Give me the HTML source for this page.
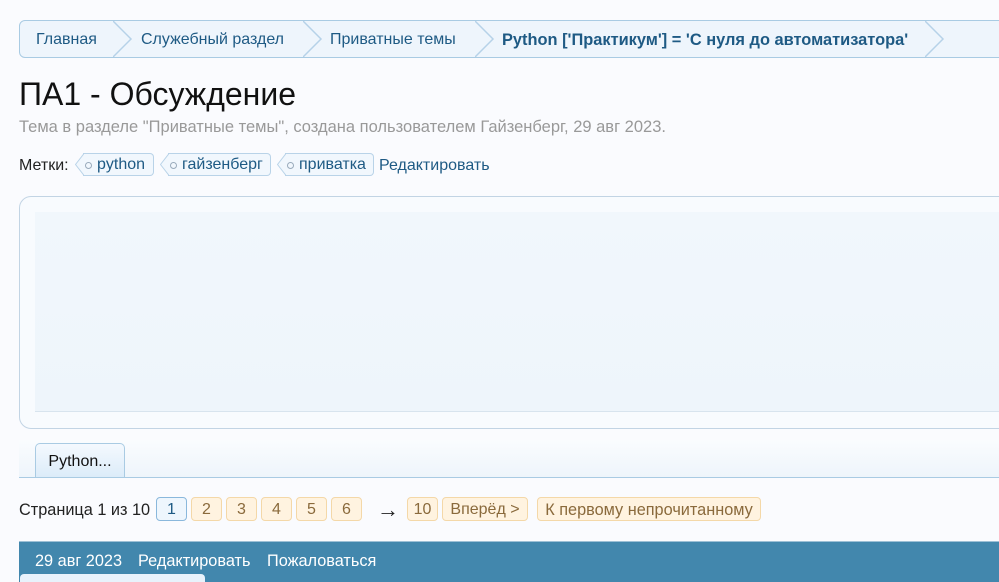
<!DOCTYPE html>
<html><head><meta charset="utf-8"><style>
body{margin:0;width:999px;height:580px;overflow:hidden;background:#fafbfe;font-family:"Liberation Sans",sans-serif;position:relative}
.a{position:absolute}
.bc{left:19px;top:20px;width:1000px;height:36px;border:1px solid #a9cbe3;border-radius:6px;background:#eef5fc;}
.bc span{position:absolute;top:10px;font-size:16px;color:#1e5a84;white-space:nowrap}
.chev{position:absolute;top:0}
h1{position:absolute;left:19px;top:76px;margin:0;font-weight:normal;font-size:32px;color:#111}
.sub{left:19px;top:118px;font-size:16.5px;color:#999;white-space:nowrap}
.tags{left:19px;top:157px;font-size:16px;color:#222}
.tag{display:inline-block;position:absolute;top:-4px;height:23px;border:1px solid #b9d3e8;border-left:none;border-radius:0 4px 4px 0;background:#f1f7fd;color:#1e5a84;line-height:22px;font-size:16px;padding-left:14px;padding-right:0;box-sizing:border-box;white-space:nowrap}
.tag svg{position:absolute;left:-8px;top:-1px}
.tag i{position:absolute;left:2px;top:8px;width:5px;height:5px;border:1px solid #9ab;border-radius:50%}
.box{left:19px;top:196px;width:1000px;height:231px;border:1px solid #c2d4e4;border-radius:12px;background:#f8fbfe}
.inner{left:35px;top:212px;width:970px;height:199px;background:linear-gradient(#f1f7fc,#eef5fb);border-bottom:1px solid #d8e4ee}
.tabbar{left:19px;top:440px;width:990px;height:37px;border-bottom:1px solid #a9cbe3;background:linear-gradient(#fafcfe,#eef5fb)}
.tab{left:35px;top:443px;width:90px;height:34px;border:1px solid #a9cbe3;border-bottom:none;border-radius:5px 5px 0 0;background:linear-gradient(#f4f9fe,#dcecf9);font-size:16px;color:#111;line-height:36px;text-align:center;box-sizing:border-box}
.pg{top:497px;height:24px;border:1px solid #f4d8a8;border-radius:4px;background:#fff3e0;color:#8a6a3c;font-size:16px;line-height:24px;text-align:center;box-sizing:border-box;white-space:nowrap}
.bar{left:19px;top:541px;width:990px;height:40px;background:#4287ad;border-top:1px solid #9dc0d6}
.bar span{position:absolute;top:10px;font-size:16.3px;color:#fff}
</style></head><body>
<div class="a bc">
<span style="left:16px">Главная</span>
<svg class="chev" style="left:93px" width="22" height="36"><path d="M0 0 L18 18 L0 36" fill="none" stroke="#b6d2e8" stroke-width="1.5"/></svg>
<span style="left:121px">Служебный раздел</span>
<svg class="chev" style="left:283px" width="22" height="36"><path d="M0 0 L18 18 L0 36" fill="none" stroke="#b6d2e8" stroke-width="1.5"/></svg>
<span style="left:310px">Приватные темы</span>
<svg class="chev" style="left:455px" width="22" height="36"><path d="M0 0 L18 18 L0 36" fill="none" stroke="#b6d2e8" stroke-width="1.5"/></svg>
<span style="left:482px;font-weight:bold;font-size:16.4px">Python ['Практикум'] = 'С нуля до автоматизатора'</span>
<svg class="chev" style="left:905px" width="22" height="36"><path d="M0 0 L18 18 L0 36" fill="none" stroke="#b6d2e8" stroke-width="1.5"/></svg>
</div>
<h1>ПА1 - Обсуждение</h1>
<div class="a sub">Тема в разделе "Приватные темы", создана пользователем Гайзенберг, 29 авг 2023.</div>
<div class="a tags">Метки:
<span class="tag" style="left:64px;width:71px"><svg width="9" height="23"><path d="M9 0.5 L0.5 11.5 L9 22.5" fill="#f1f7fd" stroke="#b9d3e8"/></svg><i></i>python</span>
<span class="tag" style="left:149px;width:103px"><svg width="9" height="23"><path d="M9 0.5 L0.5 11.5 L9 22.5" fill="#f1f7fd" stroke="#b9d3e8"/></svg><i></i>гайзенберг</span>
<span class="tag" style="left:266px;width:89px"><svg width="9" height="23"><path d="M9 0.5 L0.5 11.5 L9 22.5" fill="#f1f7fd" stroke="#b9d3e8"/></svg><i></i>приватка</span>
<span style="position:absolute;left:360px;color:#1e5a84;white-space:nowrap">Редактировать</span>
</div>
<div class="a box"></div>
<div class="a inner"></div>
<div class="a tabbar"></div>
<div class="a tab">Python...</div>
<div class="a" style="left:19px;top:501px;font-size:16.3px;color:#222;white-space:nowrap">Страница 1 из 10</div>
<div class="a pg" style="left:156px;width:31px;background:#eef6fd;border-color:#8ab8dc;color:#1e5a84">1</div>
<div class="a pg" style="left:191px;width:31px">2</div>
<div class="a pg" style="left:226px;width:31px">3</div>
<div class="a pg" style="left:261px;width:31px">4</div>
<div class="a pg" style="left:296px;width:31px">5</div>
<div class="a pg" style="left:331px;width:31px">6</div>
<div class="a" style="left:377px;top:497px;font-size:22px;color:#222">→</div>
<div class="a pg" style="left:407px;width:31px">10</div>
<div class="a pg" style="left:442px;width:86px">Вперёд &gt;</div>
<div class="a pg" style="left:537px;width:224px;font-size:16.3px">К первому непрочитанному</div>
<div class="a bar"><span style="left:16px">29 авг 2023</span><span style="left:119px">Редактировать</span><span style="left:248px">Пожаловаться</span></div>
<div class="a" style="left:20px;top:574px;width:185px;height:8px;background:#e8f2fb;border-radius:4px 4px 0 0"></div>
</body></html>
